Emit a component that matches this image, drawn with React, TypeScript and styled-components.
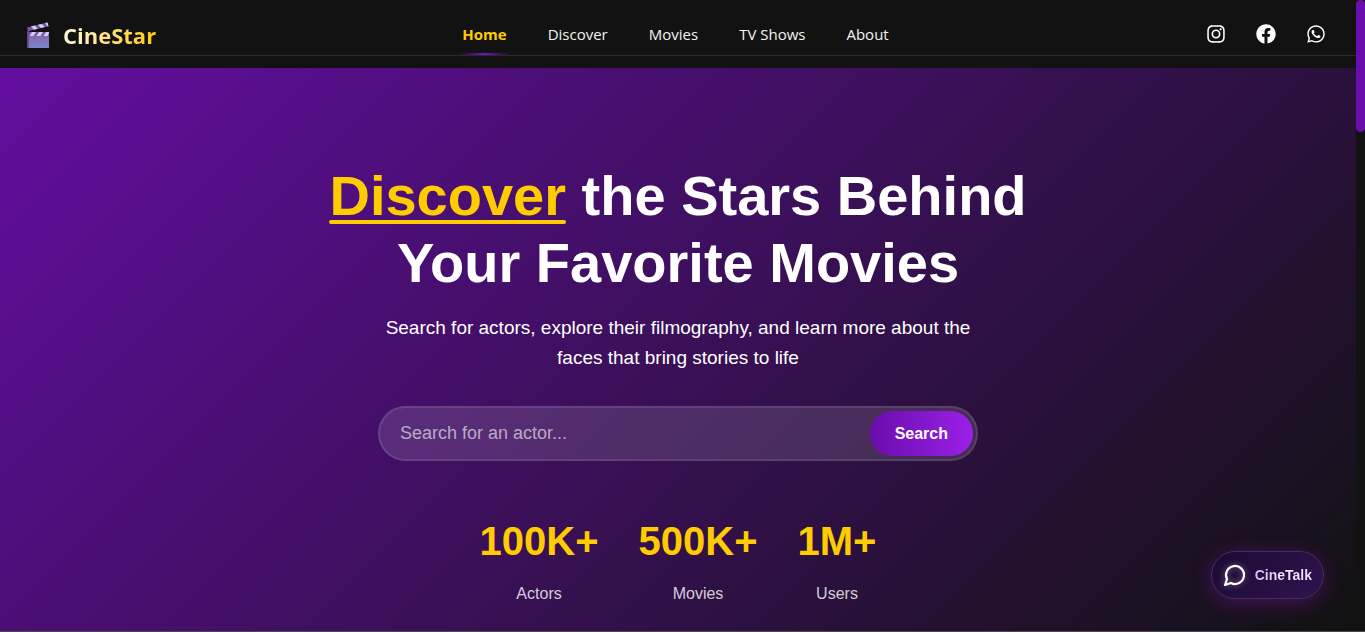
import React from "react";
import styled, { createGlobalStyle } from "styled-components";
import { FaInstagram, FaFacebook, FaWhatsapp } from "react-icons/fa";

const uiFont = `"Segoe UI", "Open Sans", "Noto Sans", sans-serif`;
const bodyFont = `Arial, "Liberation Sans", sans-serif`;

const GlobalStyle = createGlobalStyle`
  * { box-sizing: border-box; }
  body { margin: 0; background: #121212; color: #fff; font-family: ${bodyFont}; }
  h1, p, dl, dt, dd, ul { margin: 0; padding: 0; }
  a { color: inherit; text-decoration: none; }
`;

const Shell = styled.div`
  display: grid;
  grid-template-columns: minmax(0, 1fr) 9px;
  min-height: 100vh;
  border-bottom: 1px solid #4a4a4a;
`;

const Page = styled.div`
  display: flex;
  flex-direction: column;
  background: linear-gradient(135deg, #660da5, #121212);
`;

const ScrollTrack = styled.div`
  background: #121212;
`;

const ScrollThumb = styled.div`
  height: 132px;
  background: #6a0dad;
  border-radius: 5px;
`;

const TopStrip = styled.div`
  padding-bottom: 12px;
  background: #121212;
`;

const Header = styled.header`
  display: grid;
  grid-template-columns: 1fr auto 1fr;
  align-items: end;
  height: 56px;
  padding: 0 24px;
  border-bottom: 1px solid #2a2a2a;
  font-family: ${uiFont};
`;

const Brand = styled.a`
  display: flex;
  align-items: center;
  gap: 11px;
  justify-self: start;
  height: 40px;
`;

const BrandName = styled.span`
  font-size: 22px;
  line-height: 32px;
  font-weight: 700;
  background: linear-gradient(90deg, #fff8e1, #ffd43b 80%, #ffcc00);
  background-clip: text;
  -webkit-background-clip: text;
  color: transparent;
`;

const Nav = styled.nav`
  display: flex;
  gap: 33px;
  padding-right: 5px;
`;

const NavLink = styled.a<{ $active?: boolean }>`
  display: flex;
  flex-direction: column;
  padding: 0 4px;
  font-size: 15px;
  line-height: 38px;
  font-weight: ${(p) => (p.$active ? 700 : 500)};
  color: ${(p) => (p.$active ? "#ffcc00" : "#f2f2f2")};

  &::after {
    content: "";
    height: 2px;
    margin: 0 -4px;
    background: ${(p) =>
      p.$active ? "linear-gradient(90deg, transparent, #7a12c4, transparent)" : "none"};
  }
`;

const Socials = styled.div`
  display: flex;
  justify-self: end;
  align-items: center;
  gap: 30px;
  height: 43px;
  padding-right: 6px;
`;

const SocialLink = styled.a`
  display: flex;
  font-size: 20px;
`;

const Hero = styled.main`
  flex: 1;
  display: flex;
  flex-direction: column;
  align-items: center;
  padding: 94px 20px 27px;
  text-align: center;
`;

const Title = styled.h1`
  max-width: 800px;
  font-size: 56px;
  line-height: 67px;
  font-weight: 700;
`;

const Highlight = styled.span`
  display: inline-block;
  position: relative;
  color: #ffcc00;

  &::after {
    content: "";
    position: absolute;
    left: 0;
    right: 0;
    bottom: 5px;
    height: 4px;
    border-radius: 2px;
    background: #ffcc00;
  }
`;

const Subtitle = styled.p`
  max-width: 600px;
  margin-top: 17px;
  font-size: 19px;
  line-height: 30px;
`;

const SearchForm = styled.form`
  display: flex;
  width: 100%;
  max-width: 600px;
  height: 55px;
  margin-top: 33px;
  padding: 3px;
  border: 2px solid rgba(255, 255, 255, 0.1);
  border-radius: 28px;
  background: rgba(255, 255, 255, 0.12);
`;

const SearchInput = styled.input`
  flex: 1;
  min-width: 0;
  padding: 0 17px;
  border: 0;
  outline: 0;
  background: transparent;
  color: #fff;
  font-family: ${bodyFont};
  font-size: 18px;

  &::placeholder {
    color: rgba(255, 255, 255, 0.6);
  }
`;

const SearchButton = styled.button`
  padding: 0 25px;
  border: 0;
  border-radius: 23px;
  background: linear-gradient(90deg, #6a0dad, #9b20e8);
  color: #fff;
  font-family: ${bodyFont};
  font-size: 16px;
  font-weight: 700;
`;

const Stats = styled.dl`
  display: flex;
  gap: 40px;
  margin-top: 56px;
`;

const Stat = styled.div`
  display: flex;
  flex-direction: column-reverse;
  gap: 19px;
`;

const StatValue = styled.dd`
  font-size: 40px;
  line-height: 48px;
  font-weight: 700;
  color: #ffcc00;
`;

const StatLabel = styled.dt`
  font-size: 16px;
  line-height: 20px;
  color: rgba(255, 255, 255, 0.8);
`;

const ChatButton = styled.button`
  position: fixed;
  right: 41px;
  bottom: 33px;
  display: flex;
  align-items: center;
  gap: 8px;
  height: 48px;
  padding: 0 11px;
  border: 1px solid #46305f;
  border-radius: 24px;
  background: linear-gradient(135deg, #1c0a33, #301350);
  box-shadow: 0 4px 20px rgba(122, 20, 160, 0.45);
  color: #fff;
  font-family: ${bodyFont};
  font-size: 14px;
  font-weight: 700;

  svg {
    filter: drop-shadow(0 0 3px rgba(255, 255, 255, 0.4));
  }
`;

const ChatLabel = styled.span`
  background: linear-gradient(90deg, #dbb5ff, #f6eaff 50%, #f0dcff);
  background-clip: text;
  -webkit-background-clip: text;
  color: transparent;
`;

const Clapper = () => (
  <svg width="28" height="28" viewBox="0 0 28 28" aria-hidden="true">
    <defs>
      <linearGradient id="board" x1="0" y1="0" x2="0" y2="1">
        <stop offset="0" stopColor="#86609c" />
        <stop offset="1" stopColor="#7b86cf" />
      </linearGradient>
    </defs>
    <path d="M3 6.500 23.500 1.500 24.500 5.200 4 10.300Z" fill="#7b56a8" />
    <path
      d="m7 5.500 3.800-.9 3 3.200-3.800 1ZM14 3.800l3.800-.9 3 3.200-3.800 1ZM21 2.100l2.500-.6 1 3.700-.8.200Z"
      fill="#d5cdf7"
    />
    <path d="M3 11h22v16H3Z" fill="url(#board)" />
    <path d="M3 11h22v4H3Z" fill="#7b56a8" />
    <path d="M8 11h4l-2.500 4h-4ZM15 11h4l-2.500 4h-4ZM22 11h3v1.500L23.500 15h-4Z" fill="#d5cdf7" />
    <path d="M3 10h1.800v17H3Z" fill="#64477f" />
  </svg>
);

const ChatIcon = () => (
  <svg
    width="24"
    height="24"
    viewBox="0 0 24 24"
    fill="none"
    stroke="#fff"
    strokeWidth="2.2"
    strokeLinecap="round"
    strokeLinejoin="round"
    aria-hidden="true"
  >
    <path d="M7.900 20A9 9 0 1 0 4 16.100L2 22Z" />
  </svg>
);

const links = ["Home", "Discover", "Movies", "TV Shows", "About"];
const socials = [
  { name: "Instagram", Icon: FaInstagram },
  { name: "Facebook", Icon: FaFacebook },
  { name: "WhatsApp", Icon: FaWhatsapp },
];
const stats = [
  { value: "100K+", label: "Actors" },
  { value: "500K+", label: "Movies" },
  { value: "1M+", label: "Users" },
];

export default function App() {
  return (
    <>
      <GlobalStyle />
      <Shell>
        <Page>
          <TopStrip>
            <Header>
              <Brand href="#">
                <Clapper />
                <BrandName>CineStar</BrandName>
              </Brand>
              <Nav>
                {links.map((link, i) => (
                  <NavLink key={link} href="#" $active={i === 0}>
                    {link}
                  </NavLink>
                ))}
              </Nav>
              <Socials>
                {socials.map(({ name, Icon }) => (
                  <SocialLink key={name} href="#" aria-label={name}>
                    <Icon />
                  </SocialLink>
                ))}
              </Socials>
            </Header>
          </TopStrip>
          <Hero>
            <Title>
              <Highlight>Discover</Highlight> the Stars Behind Your Favorite Movies
            </Title>
            <Subtitle>
              Search for actors, explore their filmography, and learn more about the faces that
              bring stories to life
            </Subtitle>
            <SearchForm onSubmit={(e) => e.preventDefault()}>
              <SearchInput aria-label="Search for an actor" placeholder="Search for an actor..." />
              <SearchButton type="submit">Search</SearchButton>
            </SearchForm>
            <Stats>
              {stats.map((s) => (
                <Stat key={s.label}>
                  <StatLabel>{s.label}</StatLabel>
                  <StatValue>{s.value}</StatValue>
                </Stat>
              ))}
            </Stats>
          </Hero>
        </Page>
        <ScrollTrack>
          <ScrollThumb />
        </ScrollTrack>
      </Shell>
      <ChatButton type="button">
        <ChatIcon />
        <ChatLabel>CineTalk</ChatLabel>
      </ChatButton>
    </>
  );
}
